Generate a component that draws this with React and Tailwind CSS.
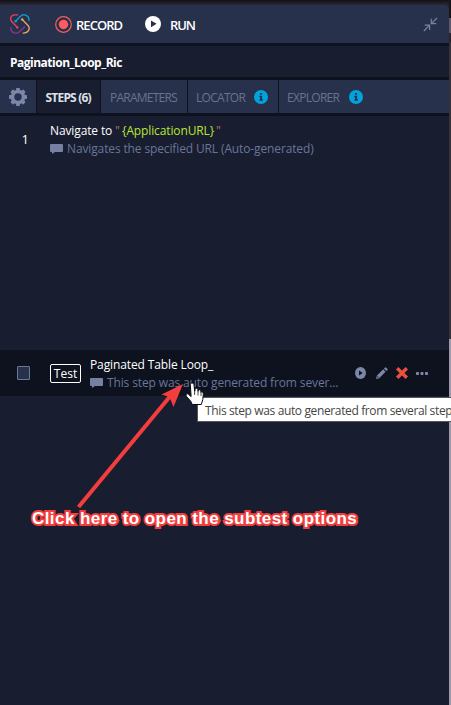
import React from "react";

function Logo() {
  return (
    <svg className="h-5 w-5 shrink-0" viewBox="0 0 20 20" fill="none" strokeWidth="1.4" strokeLinecap="round">
      <path d="M7.6 .9H4.8C.8 .9 -.6 5.2 1.9 7.7L7.4 13.4" stroke="#e83e65" />
      <path d="M5.6 7.3L10.2 2.4C13.4 -.8 19.1 1.2 19 6.2" stroke="#1599cf" />
      <path d="M12.2 5.4L17.8 11.2C20.9 14.6 18.4 19.1 13.2 19.1" stroke="#eea15e" />
      <path d="M.9 13.7C.6 19 6.5 20.7 9.8 17.6L14.6 12.7" stroke="#84358f" />
      <circle cx="7.4" cy="13.6" r="1.2" fill="#e83e65" />
      <circle cx="5.6" cy="7.2" r="1.2" fill="#1599cf" />
      <circle cx="12.2" cy="5.4" r="1.2" fill="#eea15e" />
    </svg>
  );
}

function RecordIcon() {
  return (
    <svg className="h-[17px] w-[17px] shrink-0" viewBox="0 0 17 17">
      <circle cx="8.5" cy="8.5" r="7.8" fill="none" stroke="#f75d60" strokeWidth="1.2" />
      <circle cx="8.5" cy="8.5" r="4.7" fill="#ff5b5e" />
    </svg>
  );
}

function RunIcon() {
  return (
    <svg className="h-4 w-4 shrink-0" viewBox="0 0 16 16">
      <circle cx="8" cy="8" r="8" fill="#fff" />
      <path d="M6 4.4L11.6 7.8L6 11.2Z" fill="#27314b" />
    </svg>
  );
}

function CollapseIcon() {
  return (
    <svg className="h-[15px] w-[15px] shrink-0" viewBox="0 0 15 15" fill="none" stroke="#7a839b" strokeWidth="1.2">
      <path d="M14 1L8.3 6.7M8.3 1.8V6.7H13.2M.8 14L6.6 8.2M1.8 8.2H6.6V13" />
    </svg>
  );
}

function Gear() {
  return (
    <svg className="h-[18px] w-[18px]" viewBox="0 0 18 18">
      <g fill="#7a87a8">
        <rect x="7.1" y="0" width="3.8" height="18" rx=".7" />
        <rect x="7.1" y="0" width="3.8" height="18" rx=".7" transform="rotate(45 9 9)" />
        <rect x="7.1" y="0" width="3.8" height="18" rx=".7" transform="rotate(90 9 9)" />
        <rect x="7.1" y="0" width="3.8" height="18" rx=".7" transform="rotate(135 9 9)" />
        <circle cx="9" cy="9" r="7.3" />
      </g>
      <circle cx="9" cy="9" r="3.7" fill="#27314b" />
    </svg>
  );
}

function Info() {
  return (
    <svg className="h-3.5 w-3.5 shrink-0" viewBox="0 0 14 14">
      <circle cx="7" cy="7" r="7" fill="#00a3dc" />
      <path d="M6 3H8.1V4.7H6ZM5.3 5.8H8.1V9.6H9V10.8H5.3V9.6H6.1V7H5.3Z" fill="#26334c" />
    </svg>
  );
}

function Comment() {
  return (
    <svg className="h-2.5 w-[13px] shrink-0" viewBox="0 0 13 10">
      <path d="M1 0H12Q13 0 13 1V7Q13 8 12 8H5L2 10V8H1Q0 8 0 7V1Q0 0 1 0Z" fill="#7680a2" />
    </svg>
  );
}

function RowActions() {
  return (
    <div className="ml-[16px] flex items-center">
      <svg className="h-3 w-[11px]" viewBox="0 0 11 12">
        <ellipse cx="5.5" cy="6" rx="5.5" ry="6" fill="#7c86a7" />
        <path d="M4 3.6L7.7 6L4 8.4Z" fill="#0d121e" />
      </svg>
      <svg className="ml-[10px] h-3 w-3" viewBox="0 0 12 12" fill="#7c86a7">
        <path d="M0 12L.8 8.7L7.2 2.3L9.6 4.7L3.2 11.2ZM7.9 1.6L9.1.4Q9.5 0 10 .4L11.5 1.9Q12 2.4 11.5 2.9L10.3 4.1Z" />
        <path d="M1.7 9L2.9 10.3L1.2 10.8Z" fill="#0d121e" />
      </svg>
      <svg className="ml-2 h-3 w-3" viewBox="0 0 12 12" stroke="#eb4f3e" strokeWidth="3.4">
        <path d="M1.2 1.2L10.8 10.8M10.8 1.2L1.2 10.8" />
      </svg>
      <svg className="ml-2 h-[3px] w-3" viewBox="0 0 12 3" fill="#7c86a7">
        <rect width="3" height="3" rx=".7" />
        <rect x="4.5" width="3" height="3" rx=".7" />
        <rect x="9" width="3" height="3" rx=".7" />
      </svg>
    </div>
  );
}

export default function App() {
  return (
    <div className="relative flex h-[705px] w-[451px] overflow-hidden bg-[#181d2f] font-['Open_Sans',sans-serif] text-[13px] leading-[18px] whitespace-nowrap text-white">
      <div className="flex w-[449px] flex-col">
        <div className="h-[5px] shrink-0 bg-linear-to-b from-[#111117] to-[#2b2933]" />
        <header className="flex h-[38px] shrink-0 items-center rounded-tr-sm bg-[#27314b] pr-[11px] pl-[10px] font-semibold">
          <Logo />
          <div className="ml-[25px] flex items-center">
            <RecordIcon />
            <span className="ml-[4px] w-[69px] pt-px tracking-[-0.95px]">RECORD</span>
          </div>
          <div className="flex items-center">
            <RunIcon />
            <span className="ml-[9px] pt-px tracking-[-1.1px]">RUN</span>
          </div>
          <div className="ml-auto"><CollapseIcon /></div>
        </header>
        <div className="flex h-[37px] shrink-0 items-center border-y-3 border-[#0d121e] pt-[2px] pl-[10px] text-[12px] font-bold tracking-[-0.5px]">
          Pagination_Loop_Ric
        </div>
        <nav className="flex h-9 shrink-0 border-b-3 border-[#0d121e] bg-[#27314b] text-[12px] text-[#68738e]">
          <div className="flex w-[37px] items-center border-r border-[#0d121e] pl-[9px]"><Gear /></div>
          <div className="flex w-[64px] items-center border-r border-[#0d121e] bg-[#181d2f] pt-[2px] pl-[8.5px] font-bold tracking-[-0.8px] text-[#dce0e7]">STEPS (6)</div>
          <div className="flex w-[87px] items-center border-r border-[#0d121e] pt-[2px] pl-[9px] tracking-[-0.75px]">PARAMETERS</div>
          <div className="flex w-[91px] items-center border-r border-[#0d121e] pl-[8px]">
            <span className="w-[58px] pt-[2px] tracking-[-0.7px]">LOCATOR</span><Info />
          </div>
          <div className="flex items-center pl-[8px]">
            <span className="w-[62px] pt-[2px] tracking-[-0.7px]">EXPLORER</span><Info />
          </div>
        </nav>
        <main className="flex grow flex-col">
          <section className="flex h-[234px] shrink-0 pt-[6px] text-[12px]">
            <div className="w-[50px] pt-[8px] pl-[21.5px] text-[13px] font-medium">1</div>
            <div>
              <div className="flex">
                <span className="w-[65px] tracking-[-0.12px]">Navigate to</span>
                <span className="w-[7px] text-[#b77563]">"</span>
                <span className="w-[94px] tracking-[-0.12px] text-[#b8e536]">{"{ApplicationURL}"}</span>
                <span className="text-[#b77563]">"</span>
              </div>
              <div className="flex items-center text-[#68769a]">
                <Comment /><span className="ml-[4px] tracking-[-0.13px]">Navigates the specified URL (Auto-generated)</span>
              </div>
            </div>
          </section>
          <section className="flex h-[46px] shrink-0 items-center bg-[#0d121e] pl-[17px] text-[12px]">
            <div className="h-[14px] w-[13px] rounded-[1px] border border-[#6c7797] bg-[#27314b]" />
            <div className="ml-[20px] flex h-[19px] w-[31px] items-center justify-center rounded-[2px] border border-white pt-[2px]">Test</div>
            <div className="ml-[9px] w-[249px] pt-[1px]">
              <div className="h-[18px] tracking-[-0.12px]">Paginated Table Loop_</div>
              <div className="flex items-center text-[#68769a]">
                <Comment /><span className="ml-[4px] tracking-[-0.13px]">This step was auto generated from sever...</span>
              </div>
            </div>
            <RowActions />
          </section>
        </main>
      </div>
      <div className="flex w-[2px] flex-col bg-[#3c3742]">
        <div className="h-[18px] bg-[#15151b]" />
        <div className="h-[15px] bg-[#5c576d]" />
        <div className="h-[10px] bg-[#28242e]" />
        <div className="h-[296px] bg-[#37313b]" />
        <div className="grow bg-[#9d98aa]" />
      </div>
      <div className="absolute top-[397px] left-[197px] flex h-[25px] w-[254px] items-center border border-r-0 border-[#55555b] bg-white pt-[2px] pl-[7px] text-[12px] tracking-[-0.37px] text-[#454545]">
        This step was auto generated from several step
      </div>
      <svg className="absolute top-0 left-0 h-[705px] w-[451px]" viewBox="0 0 451 705">
        <path d="M78.5 507L172 394" stroke="#f43d3d" strokeWidth="4" />
        <path d="M183 384L173.5 407L169.5 397L161.5 394.5Z" fill="#f43d3d" />
        <path d="M190.3 384.2C190.3 382.5 193.6 382.5 193.9 384.2L194.7 391.2C194.8 387.6 197.6 387.7 197.8 389.5L198.1 391.3C198.4 389.1 200.7 389.6 200.8 391.4V392.3C202 390.8 203.3 392.5 203.3 394.2L202.8 399.5L201.3 404.5H192.2L190.8 401.3L186.3 396.2C185.1 394.4 187.2 393.1 188.5 394.3L191.1 396.6Z" fill="#fff" stroke="#0b0d16" strokeWidth="1" />
        <path d="M194.6 390V395M198 391V395.5M201 392V396" stroke="#171717" strokeWidth=".8" />
      </svg>
      <div className="absolute top-[508px] left-[32px] font-['Liberation_Sans',sans-serif] text-[17px] leading-[22px] font-bold tracking-[0.43px] [-webkit-text-stroke:4px_#f43d3d] [paint-order:stroke_fill] [stroke-linejoin:round]">
        Click here to open the subtest options
      </div>
    </div>
  );
}
